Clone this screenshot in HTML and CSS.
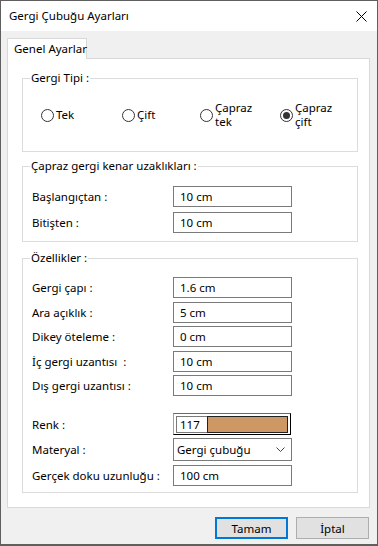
FILE: index.html
```html
<!DOCTYPE html>
<html lang="tr">
<head>
    <meta charset="UTF-8">
    <title>Gergi Çubuğu Ayarları</title>
    <link rel="stylesheet" href="styles.css">
</head>
<body>
<div class="window">
    <div class="titlebar">
        <span class="title">Gergi Çubuğu Ayarları</span>
        <svg class="close" width="11" height="11" viewBox="0 0 11 11">
            <path d="M0.5 0.5 L10.5 10.5 M10.5 0.5 L0.5 10.5" stroke="#000" stroke-width="1" fill="none"/>
        </svg>
    </div>

    <div class="content">
        <div class="tabs">
            <div class="tab">Genel Ayarlar</div>
        </div>

        <div class="panel">
            <fieldset class="group group-type">
                <legend>Gergi Tipi :</legend>
                <div class="radios">
                    <label class="radio"><span class="dot"></span><span>Tek</span></label>
                    <label class="radio"><span class="dot"></span><span>Çift</span></label>
                    <label class="radio"><span class="dot"></span><span>Çapraz<br>tek</span></label>
                    <label class="radio"><span class="dot checked"></span><span>Çapraz<br>çift</span></label>
                </div>
            </fieldset>

            <fieldset class="group group-edge">
                <legend>Çapraz gergi kenar uzaklıkları :</legend>
                <div class="row"><span>Başlangıçtan :</span><div class="field">10 cm</div></div>
                <div class="row"><span>Bitişten :</span><div class="field">10 cm</div></div>
            </fieldset>

            <fieldset class="group group-props">
                <legend>Özellikler :</legend>
                <div class="row"><span>Gergi çapı :</span><div class="field">1.6 cm</div></div>
                <div class="row"><span>Ara açıklık :</span><div class="field">5 cm</div></div>
                <div class="row"><span>Dikey öteleme :</span><div class="field">0 cm</div></div>
                <div class="row"><span>İç gergi uzantısı &nbsp;:</span><div class="field">10 cm</div></div>
                <div class="row"><span>Dış gergi uzantısı :</span><div class="field">10 cm</div></div>

                <div class="row row-color">
                    <span>Renk :</span>
                    <div class="color-field">
                        <div class="color-num">117</div>
                        <div class="color-swatch"></div>
                    </div>
                </div>
                <div class="row row-combo">
                    <span>Materyal :</span>
                    <div class="combo">
                        <span>Gergi çubuğu</span>
                        <svg width="9" height="5" viewBox="0 0 9 5">
                            <path d="M0.5 0.5 L4.5 4.5 L8.5 0.5" stroke="#444" stroke-width="1" fill="none"/>
                        </svg>
                    </div>
                </div>
                <div class="row"><span>Gerçek doku uzunluğu :</span><div class="field">100 cm</div></div>
            </fieldset>
        </div>

        <div class="buttons">
            <button class="btn btn-default">Tamam</button>
            <button class="btn">İptal</button>
        </div>
    </div>
</div>
</body>
</html>
```

FILE: styles.css
```css
body {
    margin: 0;
    font-family: 'Noto Sans', 'DejaVu Sans', sans-serif;
    font-size: 11.5px;
    color: #000;
    background: #f0f0f0;
}

.window {
    width: 378px;
    height: 546px;
    box-sizing: border-box;
    border: 1px solid #5f5f5f;
    border-bottom-width: 2px;
    display: flex;
    flex-direction: column;
    background: #f0f0f0;
}

.titlebar {
    height: 30px;
    background: #fff;
    display: flex;
    align-items: center;
    justify-content: space-between;
    padding: 0 10px 0 8px;
    flex-shrink: 0;
}

.title {
    font-size: 11.5px;
    line-height: 16px;
}

.close {
    display: block;
}

.content {
    flex: 1;
    padding: 7px 7px 0 6px;
    display: flex;
    flex-direction: column;
}

.tabs {
    display: flex;
}

.tab {
    position: relative;
    z-index: 1;
    width: 80px;
    height: 21px;
    box-sizing: border-box;
    border: 1px solid #d9d9d9;
    border-bottom: none;
    background: #fff;
    margin-bottom: -1px;
    padding-left: 6px;
    line-height: 19px;
    white-space: nowrap;
}

.panel {
    background: #fff;
    border: 1px solid #d9d9d9;
    height: 450px;
    box-sizing: border-box;
    padding: 11px 11px 0 14px;
}

.group {
    margin: 0;
    border: 1px solid #dcdcdc;
    padding: 0 7px;
    min-width: 0;
}

.group legend {
    padding: 0 1px;
    line-height: 16px;
}

.group-type {
    padding-top: 15px;
    padding-bottom: 22px;
}

.group-edge {
    margin-top: 6px;
    padding-top: 12px;
    padding-bottom: 8px;
}

.group-props {
    margin-top: 8px;
    padding-top: 11px;
    padding-bottom: 6px;
}

.radios {
    display: grid;
    grid-template-columns: 81px 78px 80px auto;
    padding-left: 11px;
    height: 28px;
}

.radio {
    display: flex;
    align-items: center;
    gap: 2px;
    line-height: 14px;
}

.dot {
    width: 13px;
    height: 13px;
    box-sizing: border-box;
    border: 1px solid #333;
    border-radius: 50%;
    display: flex;
    align-items: center;
    justify-content: center;
    flex-shrink: 0;
}

.dot.checked::after {
    content: "";
    width: 7px;
    height: 7px;
    border-radius: 50%;
    background: #333;
}

.row {
    display: grid;
    grid-template-columns: 143px 117px;
    align-items: center;
    padding-left: 2px;
}

.row + .row {
    margin-top: 3.5px;
}

.group-edge .row + .row {
    margin-top: 5px;
}

.field {
    height: 21px;
    box-sizing: border-box;
    border: 1px solid #7a7a7a;
    padding-left: 6px;
    line-height: 19px;
    margin-left: -2px;
}

.row.row-color {
    margin-top: 17px;
}

.color-field {
    height: 22px;
    width: 118px;
    box-sizing: border-box;
    margin-left: -2px;
    border: 1px solid #000;
    border-left-color: #a0a0a0;
    border-top-color: #696969;
    padding: 2px 2px 1px 2px;
    display: flex;
    background: #fff;
}

.color-num {
    width: 31px;
    box-sizing: border-box;
    border: 1px solid #7a7a7a;
    border-right: none;
    padding-left: 3px;
    line-height: 15px;
}

.color-swatch {
    flex: 1;
    background: #cd9864;
    border: 1px solid #222;
}

.row.row-combo {
    margin-top: 3px;
}

.combo {
    height: 23px;
    box-sizing: border-box;
    border: 1px solid #7a7a7a;
    margin-left: -2px;
    padding: 0 6px 0 3px;
    display: flex;
    align-items: center;
    justify-content: space-between;
}

.buttons {
    display: flex;
    justify-content: flex-end;
    gap: 8px;
    margin-top: 9px;
    padding-right: 1px;
}

.btn {
    font-family: inherit;
    font-size: 11.5px;
    width: 73px;
    height: 22px;
    box-sizing: border-box;
    background: #e1e1e1;
    border: 1px solid #adadad;
    padding: 0;
    color: #000;
}

.btn-default {
    border: 2px solid #0078d7;
}
```
